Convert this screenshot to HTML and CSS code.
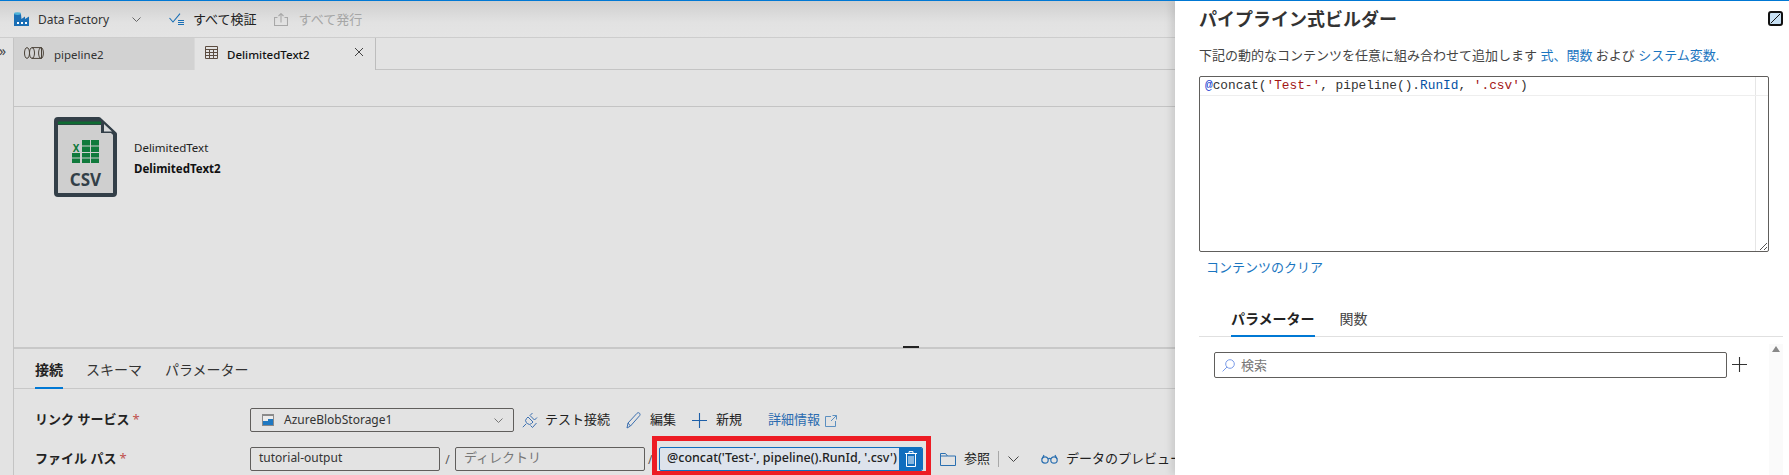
FILE: index.html
```html
<!DOCTYPE html>
<html lang="ja">
<head>
<meta charset="utf-8">
<title>パイプライン式ビルダー</title>
<link rel="stylesheet" href="styles.css">
</head>
<body>
<div class="app">
  <main class="work">
    <header class="toolbar">
      <svg class="ic-factory" viewBox="0 0 16 16"><path fill="#1b6fb5" d="M0 3.5C0 2.7 1.6 2 3.5 2S7 2.700 7 3.500L7.500 8 11 5.500V8l4-2.500V15H0z"/><ellipse cx="3.500" cy="2.600" rx="3.500" ry="1.400" fill="#4fb3d9"/><path fill="#fff" d="M3 11h2v2H3zM7 11h2v2H7zM11 11h2v2h-2z"/></svg>
      <span class="tb-name">Data Factory</span>
      <svg class="ic-chev" viewBox="0 0 9 5"><path d="M.5.500 4.500 4.500 8.500.5" fill="none" stroke="#666" stroke-width="1"/></svg>
      <svg class="ic-validate" viewBox="0 0 15 12"><path d="M.5 5 4 9 11 .7" fill="none" stroke="#1a6fb5" stroke-width="1.100"/><path d="M9 7.500h6M9 9.500h6M9 11.500h6" stroke="#1a6fb5" stroke-width="1"/></svg>
      <span class="tb-action">すべて検証</span>
      <svg class="ic-publish" viewBox="0 0 14 13"><path d="M3.500 4.500H.5v8h13v-8h-3M7 9.500V.8M4.500 3 7 .6 9.500 3" fill="none" stroke="#a8a8a8" stroke-width="1.100"/></svg>
      <span class="tb-action tb-disabled">すべて発行</span>
    </header>
    <div class="stage">
      <nav class="rail"><span class="rail-mark">»</span></nav>
      <div class="content">
        <div class="tabs">
          <div class="tab tab-off">
            <svg class="ic-pipe" viewBox="0 0 20 12"><g fill="none" stroke="#4a4238" stroke-width="1"><ellipse cx="3" cy="6" rx="2.500" ry="5.400"/><ellipse cx="8" cy="6" rx="2.500" ry="5.400"/><path d="M8 .6h9.500v10.800H8"/><ellipse cx="17" cy="6" rx="2.400" ry="5.400"/></g></svg>
            <span>pipeline2</span>
          </div>
          <div class="tab tab-on">
            <svg class="ic-grid" viewBox="0 0 13 13"><path d="M.5.500h12v12H.5zM.5 3.500h12M.5 6.500h12M.5 9.500h12M4.500 3.500v9M8.500 3.500v9" fill="none" stroke="#5c4c40" stroke-width="1"/></svg>
            <span class="tab-title">DelimitedText2</span>
            <svg class="ic-close" viewBox="0 0 10 10"><path d="M1 1l8 8M9 1 1 9" stroke="#444" stroke-width="1"/></svg>
          </div>
        </div>
        <div class="strip"></div>
        <section class="dataset">
          <svg class="ic-csv" viewBox="0 0 63 80">
            <path d="M4 2h41l16 15v59a2 2 0 0 1-2 2H4a2 2 0 0 1-2-2V4a2 2 0 0 1 2-2z" fill="#cfcfcf" stroke="#333f48" stroke-width="4" stroke-linejoin="round"/>
            <path d="M2 3h44v5H2z" fill="#333f48"/>
            <path d="M2 8h45v8h15l-16-15z" fill="#333f48"/>
            <path d="M4 4.500h43v2.800H4z" fill="#0f6b32"/>
            <path d="M50 7v7.500h8z" fill="#d8dadb"/>
            <g fill="#107a3c">
              <path d="M28 23h8v5.500h-8zM37 23h8v5.500h-8zM28 29.500h8V35h-8zM37 29.500h8V35h-8zM18 36h8v4.500h-8zM28 36h8v4.500h-8zM37 36h8v4.500h-8zM18 41.500h8V46h-8zM28 41.500h8V46h-8zM37 41.500h8V46h-8z"/>
            </g>
            <text x="22" y="34.500" class="csv-x">X</text>
            <text x="31.500" y="69" class="csv-label">CSV</text>
          </svg>
          <div class="ds-text">
            <div class="ds-type">DelimitedText</div>
            <div class="ds-name">DelimitedText2</div>
          </div>
        </section>
        <section class="props">
          <div class="prop-tabs">
            <span class="prop-tab prop-tab-on">接続</span>
            <span class="prop-tab">スキーマ</span>
            <span class="prop-tab">パラメーター</span>
          </div>
          <div class="form">
            <div class="row">
              <label class="lbl">リンク サービス<span class="req">*</span></label>
              <div class="select">
                <svg class="ic-blob" viewBox="0 0 12 12"><path fill="#8a8a8a" d="M0 0h12v12H0z"/><path fill="#ececec" d="M1 2h10v3H6v2H1z"/><path fill="#1f78c1" d="M1 7h5V5h5v6H1z"/></svg>
                <span class="select-text">AzureBlobStorage1</span>
                <svg class="ic-chev ic-chev-sel" viewBox="0 0 9 5"><path d="M.5.500 4.500 4.500 8.500.5" fill="none" stroke="#777" stroke-width="1"/></svg>
              </div>
              <svg class="ic-plug" viewBox="0 0 16 17"><g fill="none" stroke="#3b6fb0" stroke-width="1"><path d="M6 5l5 5-1.500 1.500a3 3 0 0 1-4.200 0l-.8-.8a3 3 0 0 1 0-4.200zM10.500 1 8 3.500 12.500 8l2.500-2.500M.8 15.200l3.500-3.500M8.500 13.500l2 2 4-4.500"/></g></svg>
              <span class="act act-test">テスト接続</span>
              <svg class="ic-pencil" viewBox="0 0 15 17"><path d="M1 16l1-5L11 1.300c.8-.8 2-.8 2.600 0s.6 1.800-.1 2.500L4.500 14z" fill="none" stroke="#3b6fb0" stroke-width="1"/><path d="M2 11l2.500 3" stroke="#3b6fb0" stroke-width="1"/></svg>
              <span class="act act-edit">編集</span>
              <svg class="ic-plus" viewBox="0 0 15 15"><path d="M7.500 0v15M0 7.500h15" stroke="#1d5fa8" stroke-width="1.100"/></svg>
              <span class="act act-new">新規</span>
              <a class="more">詳細情報</a>
              <svg class="ic-ext" viewBox="0 0 12 12"><path d="M6 1.500H.5v10h10V6M7.500.5h4v4M11.500.5 6 6" fill="none" stroke="#5b8fc0" stroke-width="1"/></svg>
            </div>
            <div class="row">
              <label class="lbl">ファイル パス<span class="req">*</span></label>
              <div class="input">tutorial-output</div>
              <span class="slash">/</span>
              <div class="input input-ph">ディレクトリ</div>
              <span class="slash slash-2">/</span>
              <div class="field">
                <span class="field-text">@concat('Test-', pipeline().RunId, '.csv')</span>
                <span class="trash"><svg class="ic-trash" viewBox="0 0 12 16"><path d="M0 2.500h12M4 2.500V.6h4v1.900M1.500 2.500v13h9v-13M4 5v8M6 5v8M8 5v8" fill="none" stroke="#fff" stroke-width="1"/></svg></span>
              </div>
              <svg class="ic-folder" viewBox="0 0 16 13"><path d="M.5 12.500V.5h5l2 2.500h8v9.500zM.5 3h7" fill="none" stroke="#2a6fb0" stroke-width="1"/></svg>
              <span class="act act-browse">参照</span>
              <span class="sep"></span>
              <svg class="ic-chev ic-chev-act" viewBox="0 0 11 6"><path d="M.5.500 5.500 5.500 10.500.5" fill="none" stroke="#444" stroke-width="1"/></svg>
              <svg class="ic-glasses" viewBox="0 0 17 10"><g fill="none" stroke="#2a6fb0" stroke-width="1.200"><circle cx="4" cy="6" r="3.200"/><circle cx="13" cy="6" r="3.200"/><path d="M7 5c1-.8 2-.8 3 0M1 5l2-4M16 5l-2-4"/></g></svg>
              <span class="act act-preview">データのプレビュー</span>
            </div>
          </div>
        </section>
      </div>
    </div>
    <div class="marker"></div>
    <div class="grip"></div>
  </main>
  <aside class="panel">
    <div class="panel-head">
      <h1 class="panel-title">パイプライン式ビルダー</h1>
      <svg class="ic-expand" viewBox="0 0 15 15"><rect x="1" y="1" width="13" height="13" rx="2" fill="#c7e0f4" stroke="#111" stroke-width="2"/><path d="M3 12 12 3" stroke="#111" stroke-width="1"/></svg>
    </div>
    <p class="panel-desc">下記の動的なコンテンツを任意に組み合わせて追加します <a>式、</a><a>関数</a> および <a>システム変数.</a></p>
    <div class="editor">
      <div class="code-line"><span class="c-at">@</span>concat(<span class="c-str">'Test-'</span>, pipeline().<span class="c-id">RunId</span>, <span class="c-str">'.csv'</span>)</div>
      <svg class="ic-resize" viewBox="0 0 7 7"><path d="M0 7 7 0M4 7l3-3" stroke="#555" stroke-width="1"/></svg>
    </div>
    <a class="clear">コンテンツのクリア</a>
    <div class="panel-tabs">
      <span class="panel-tab panel-tab-on">パラメーター</span>
      <span class="panel-tab">関数</span>
    </div>
    <div class="panel-body">
      <div class="search-row">
        <div class="search">
          <svg class="ic-search" viewBox="0 0 13 13"><circle cx="8" cy="5" r="4.300" fill="none" stroke="#7a9be8" stroke-width="1"/><path d="M5 8 .6 12.400" stroke="#7a9be8" stroke-width="1"/></svg>
          <span>検索</span>
        </div>
        <svg class="ic-add" viewBox="0 0 15 15"><path d="M7.500 0v15M0 7.500h15" stroke="#333" stroke-width="1.100"/></svg>
      </div>
      <div class="scrollbar"><span class="scroll-up"></span></div>
    </div>
  </aside>
</div>
</body>
</html>
```

FILE: styles.css
```css
* { box-sizing: border-box; }
html, body { margin: 0; height: 100%; overflow: hidden; }
body {
  font-family: "Noto Sans", "Noto Sans CJK JP", sans-serif;
  font-size: 13px;
  color: #222;
  background: #fff;
}
svg { display: block; flex: none; }
a { color: #106ebe; }

.app {
  display: flex;
  width: 1789px;
  height: 475px;
  border-top: 1px solid #0078d4;
  overflow: hidden;
}
.work {
  position: relative;
  width: 1175px;
  flex: none;
  display: flex;
  flex-direction: column;
  background: #e3e3e3;
  overflow: hidden;
}

/* top toolbar */
.toolbar {
  height: 37px;
  flex: none;
  display: flex;
  align-items: center;
  padding-left: 14px;
  background: linear-gradient(#cfcfcf, #e2e2e2 60%, #e4e4e4);
  border-bottom: 1px solid #cdcdcd;
}
.ic-factory { width: 16px; height: 16px; }
.tb-name { margin-left: 8px; font-size: 12px; color: #333; width: 94px; }
.ic-chev { width: 9px; height: 5px; }
.ic-validate { width: 15px; height: 12px; margin-left: 28px; }
.tb-action { font-size: 13px; color: #222; margin-left: 9px; padding-bottom: 2px; }
.ic-publish { width: 14px; height: 13px; margin-left: 17px; }
.tb-disabled { color: #a6a6a6; margin-left: 11px; }

/* stage */
.stage { flex: 1; display: flex; min-height: 0; }
.rail { width: 14px; flex: none; border-right: 1px solid #c4c4c4; }
.rail-mark { display: block; font-size: 14px; line-height: 26px; margin-left: -1px; color: #444; }
.content { flex: 1; display: flex; flex-direction: column; min-width: 0; }

.tabs { height: 32px; flex: none; display: flex; border-bottom: 1px solid #c4c4c4; }
.tab { width: 181px; height: 32px; display: flex; align-items: center; font-size: 11.500px; }
.tab-off { background: #d2d2d2; padding-left: 10px; color: #333; border-right: 1px solid #d9d9d9; }
.tab-off span { margin-left: 10px; }
.tab-on { background: #e3e3e3; padding-left: 10px; border-right: 1px solid #bdbdbd; }
.ic-pipe { width: 20px; height: 12px; margin-bottom: 3px; }
.ic-grid { width: 13px; height: 13px; margin-bottom: 3px; }
.tab-title { margin-left: 9px; font-weight: 500; width: 127px; color: #111; }
.ic-close { width: 10px; height: 10px; margin-bottom: 4px; }

.strip { height: 37px; flex: none; border-bottom: 1px solid #c4c4c4; }

.dataset { flex: 1; min-height: 0; display: flex; align-items: flex-start; padding: 10px 0 0 40px; }
.ic-csv { width: 63px; height: 80px; }
.csv-x { font: 700 10px "Noto Sans", sans-serif; fill: #107a3c; text-anchor: middle; }
.csv-label { font: 700 17px "Noto Sans", sans-serif; fill: #333f48; text-anchor: middle; }
.ds-text { margin: 21px 0 0 17px; font-size: 11.500px; }
.ds-type { line-height: 20px; color: #222; }
.ds-name { line-height: 20px; margin-top: 1px; font-weight: 700; color: #111; }

/* properties */
.props { height: 128px; flex: none; border-top: 2px solid #c8c8c8; }
.prop-tabs {
  height: 40px;
  display: flex;
  align-items: stretch;
  gap: 23px;
  padding-left: 21px;
  border-bottom: 1px solid #c8c8c8;
  font-size: 14px;
}
.prop-tab { height: 40px; line-height: 42px; color: #333; }
.prop-tab-on { font-weight: 700; border-bottom: 2px solid #0078d4; color: #222; }
.form { padding: 19px 0 0 21px; display: flex; flex-direction: column; gap: 15px; }
.row { height: 24px; display: flex; align-items: center; white-space: nowrap; }
.lbl { width: 215px; flex: none; font-size: 13px; font-weight: 700; color: #222; padding-bottom: 3px; }
.req { color: #c0504d; margin-left: 3px; font-weight: 400; }
.select {
  width: 264px; height: 24px; flex: none;
  display: flex; align-items: center;
  padding-left: 11px;
  border: 1px solid #605e5c;
  border-radius: 2px;
  font-size: 12px; color: #333;
}
.select-text { padding-bottom: 1px; }
.ic-blob { width: 12px; height: 12px; margin-right: 10px; }
.ic-chev-sel { margin-left: auto; margin-right: 10px; }
.ic-plug { width: 16px; height: 17px; margin-left: 8px; }
.act { flex: none; font-size: 13px; color: #222; padding-bottom: 4px; }
.act-test { margin-left: 7px; }
.ic-pencil { width: 15px; height: 17px; margin-left: 16px; }
.act-edit { margin-left: 9px; }
.ic-plus { width: 15px; height: 15px; margin-left: 16px; }
.act-new { margin-left: 9px; }
.more { margin-left: 26px; font-size: 13px; color: #2a6bb0; padding-bottom: 4px; }
.ic-ext { width: 12px; height: 12px; margin-left: 5px; margin-top: 2px; }

.input {
  width: 190px; height: 24px; flex: none;
  padding-left: 8px;
  line-height: 19px;
  border: 1px solid #605e5c;
  border-radius: 2px;
  font-size: 12px; color: #333;
}
.input-ph { font-size: 13px; color: #777; }
.slash { width: 15px; flex: none; text-align: center; color: #555; font-size: 12px; }
.slash-2 { width: 14px; text-align: left; padding-left: 3px; }
.field {
  width: 264px; height: 24px; flex: none;
  display: flex;
  background: #dde3ec;
  border: 1px solid #106ebe;
  border-radius: 2px;
  overflow: hidden;
}
.field-text { flex: 1; padding-left: 7px; line-height: 20px; font-size: 12.500px; font-weight: 500; color: #222; overflow: hidden; }
.trash { width: 23px; flex: none; display: flex; align-items: center; justify-content: center; background: #106ebe; }
.ic-trash { width: 12px; height: 16px; }
.ic-folder { width: 16px; height: 13px; margin-left: 17px; }
.act-browse { margin-left: 8px; }
.sep { flex: none; width: 1px; height: 16px; background: #a8a8a8; margin-left: 8px; }
.ic-chev-act { width: 11px; height: 6px; margin-left: 9px; }
.ic-glasses { width: 17px; height: 10px; margin-left: 22px; }
.act-preview { margin-left: 8px; }

/* annotation and splitter marks over the page */
.marker {
  position: absolute;
  left: 652px; top: 435px;
  width: 279px; height: 40px;
  border: 5px solid #ed1c24;
  pointer-events: none;
}
.grip {
  position: absolute;
  left: 903px; top: 345px;
  width: 16px; height: 2px;
  background: #222;
}

/* side panel */
.panel {
  flex: 1;
  min-width: 0;
  padding: 0 6px 0 24px;
  background: #fff;
  box-shadow: -3px 0 8px rgba(0, 0, 0, .12);
  position: relative;
  display: flex;
  flex-direction: column;
}
.panel-head { height: 36px; display: flex; align-items: center; justify-content: space-between; }
.panel-title { margin: 0; font-size: 18px; font-weight: 700; color: #333; line-height: 34px; }
.ic-expand { width: 15px; height: 15px; margin-top: -1px; }
.panel-desc { margin: 9px 0 0; font-size: 13px; line-height: 19px; color: #444; white-space: nowrap; }
.panel-desc a { color: #1a75c0; }
.editor {
  position: relative;
  width: 570px; height: 176px;
  margin-top: 11px;
  flex: none;
  border: 1px solid #605e5c;
  border-radius: 2px;
  background: linear-gradient(to right, #fff 555px, #e6e6e6 555px, #e6e6e6 556px, #fff 556px);
}
.code-line {
  height: 19px;
  padding-left: 5px;
  border-bottom: 1px solid #eee;
  font: 12.800px/18px "Liberation Mono", monospace;
  color: #333;
}
.c-at { color: #2040d0; }
.c-str { color: #a31515; }
.c-id { color: #0451a5; }
.ic-resize { position: absolute; right: 1px; bottom: 1px; width: 7px; height: 7px; }
.clear { margin: 6px 0 0 7px; font-size: 13px; line-height: 19px; color: #1a75c0; }
.panel-tabs {
  height: 36px;
  flex: none;
  margin-top: 24px;
  padding-left: 32px;
  display: flex;
  gap: 25px;
  border-bottom: 1px solid #e0e0e0;
  font-size: 14px;
}
.panel-tab { line-height: 36px; height: 34px; color: #444; }
.panel-tab-on { height: 36px; font-weight: 700; color: #222; border-bottom: 2px solid #0078d4; }
.panel-body { flex: 1; display: flex; min-height: 0; }
.search-row { width: 570px; flex: none; display: flex; padding: 15px 0 0 15px; align-items: flex-start; }
.search {
  width: 513px; height: 26px;
  display: flex; align-items: center;
  padding-left: 7px;
  border: 1px solid #605e5c;
  border-radius: 2px;
  font-size: 13px; color: #777;
}
.search span { padding-bottom: 2px; }
.ic-search { width: 13px; height: 13px; margin-right: 6px; }
.ic-add { width: 15px; height: 15px; margin: 5px 0 0 5px; }
.scrollbar { flex: 1; background: #fafafa; position: relative; margin-top: 7px; }
.scroll-up {
  display: block;
  width: 0; height: 0;
  margin: 2px auto 0;
  border: 4.500px solid transparent;
  border-top: 0;
  border-bottom: 6px solid #888;
}
```
